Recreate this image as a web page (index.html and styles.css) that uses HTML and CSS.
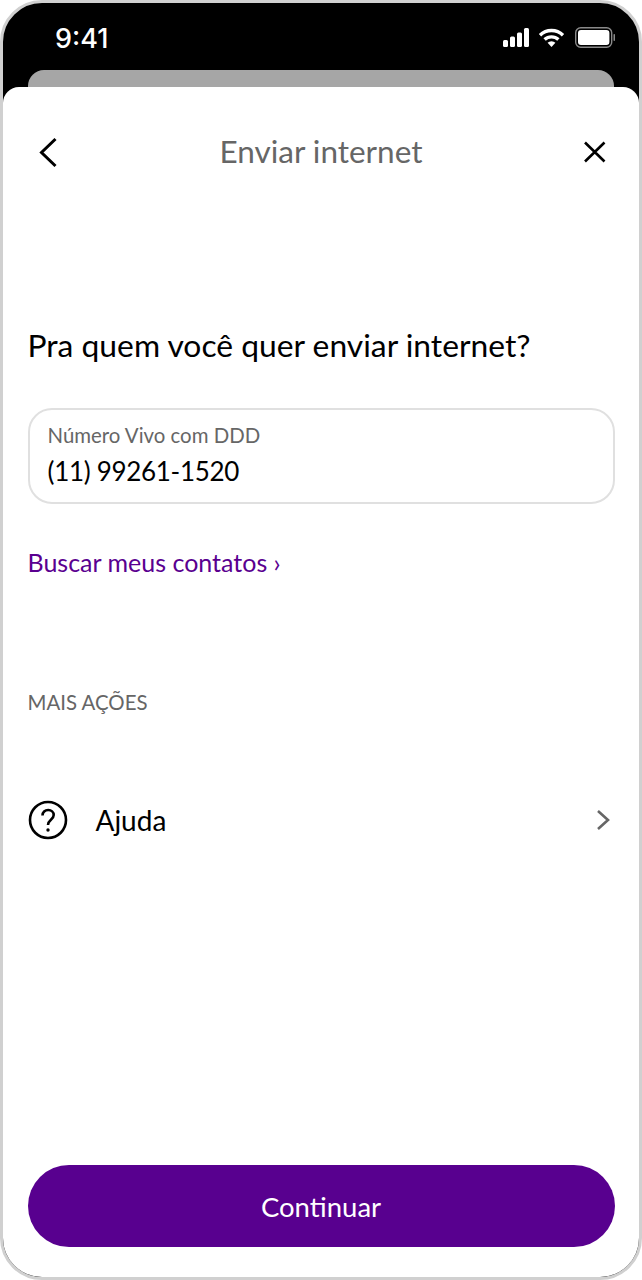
FILE: index.html
```html
<!DOCTYPE html>
<html lang="pt-BR">
<head>
<meta charset="utf-8">
<title>Enviar internet</title>
<link rel="stylesheet" href="styles.css">
</head>
<body>
<div class="phone">
  <div class="statusbar">
    <span class="time">9:41</span>
    <div class="status-icons">
      <svg class="signal" width="26" height="20" viewBox="0 0 26 20"><rect x="0" y="12" width="5" height="7" rx="1.5"/><rect x="7" y="8.5" width="5" height="10.5" rx="1.5"/><rect x="14" y="4.5" width="5" height="14.5" rx="1.5"/><rect x="21" y="0" width="5" height="19" rx="1.5"/></svg>
      <svg class="wifi" width="27" height="20" viewBox="0 0 27 20"><path d="M2 7.2a16.500 16.500 0 0 1 23 0" /><path d="M6.600 11.600a10 10 0 0 1 13.800 0"/><path class="wifi-dot" d="M13.500 19l-3.900-4.200a5.600 5.600 0 0 1 7.800 0z"/></svg>
      <svg class="battery" width="41" height="21" viewBox="0 0 41 21"><rect class="battery-case" x="0.700" y="0.700" width="36" height="19.600" rx="5"/><rect class="battery-fill" x="3" y="3" width="31.400" height="15" rx="3"/><rect class="battery-cap" x="38.500" y="7" width="1.500" height="7" rx="0.700"/></svg>
    </div>
  </div>
  <div class="peek"></div>
  <main class="sheet">
    <header class="topbar">
      <svg class="icon-btn" width="40" height="40" viewBox="0 0 40 40"><path d="M27.500 7 L13.500 20.500 L27.500 34" /></svg>
      <h1 class="title">Enviar internet</h1>
      <svg class="icon-btn thin" width="40" height="40" viewBox="0 0 40 40"><path d="M10 10.500 L29.500 29.500 M29.500 10.500 L10 29.500"/></svg>
    </header>
    <h2 class="question">Pra quem você quer enviar internet?</h2>
    <div class="field">
      <span class="field-label">Número Vivo com DDD</span>
      <span class="field-value">(11) 99261-1520</span>
    </div>
    <a class="contacts" href="#">Buscar meus contatos ›</a>
    <h3 class="section">MAIS AÇÕES</h3>
    <div class="row">
      <svg class="help" width="40" height="40" viewBox="0 0 40 40"><circle cx="20" cy="20" r="18"/><path d="M14.500 15.500c0-3.500 2.500-5.500 5.700-5.500 3.100 0 5.500 2 5.500 5 0 4.800-5.700 4.800-5.700 10"/><circle class="help-dot" cx="20" cy="30" r="1.700"/></svg>
      <span class="row-label">Ajuda</span>
      <svg class="row-chevron" width="16" height="24" viewBox="0 0 16 24"><path d="M3 3 L13 12 L3 21"/></svg>
    </div>
    <button class="cta" type="button">Continuar</button>
  </main>
</div>
</body>
</html>
```
FILE: styles.css
```css
* { box-sizing: border-box; }
html, body { margin: 0; padding: 0; background: #fff; }
body { font-family: Lato, "Noto Sans", sans-serif; }
.phone {
  width: 642px;
  height: 1280px;
  border: 3px solid #d0d0d0;
  border-radius: 42px;
  background: #000;
  overflow: hidden;
  display: flex;
  flex-direction: column;
}
.statusbar {
  height: 67px;
  flex: none;
  display: flex;
  justify-content: space-between;
  align-items: flex-start;
  padding: 20px 23px 0 52px;
  color: #fff;
}
.time { font-family: Inter, sans-serif; font-size: 27px; line-height: 32px; font-weight: 500; }
.status-icons { display: flex; align-items: center; gap: 9px; padding-top: 4px; }
.signal { fill: #fff; }
.wifi path { fill: none; stroke: #fff; stroke-width: 3.400; }
.wifi .wifi-dot { fill: #fff; stroke: none; }
.battery { margin-left: 1px; }
.battery-case { fill: none; stroke: #8a8a8a; stroke-width: 1.400; }
.battery-fill { fill: #fff; }
.battery-cap { fill: #8a8a8a; }
.peek {
  height: 17px;
  flex: none;
  margin: 0 25px;
  background: #a6a6a6;
  border-radius: 16px 16px 0 0;
}
.sheet {
  flex: 1;
  background: #fff;
  border-radius: 16px 16px 0 0;
  display: flex;
  flex-direction: column;
  padding: 0 24.500px 30px;
}
.topbar {
  display: flex;
  justify-content: space-between;
  align-items: center;
  margin-top: 45px;
  height: 40px;
}
.icon-btn { fill: none; stroke: #000; stroke-width: 3; }
.icon-btn.thin { stroke-width: 2.600; }
.title {
  margin: 0 0 2px;
  font-size: 31.500px;
  line-height: 38px;
  font-weight: 400;
  color: #666;
}
.question {
  margin: 153px 0 0;
  font-size: 31.800px;
  line-height: 40px;
  font-weight: 400;
  color: #000;
}
.field {
  margin-top: 43px;
  height: 96px;
  border: 2px solid #e0e0e0;
  border-radius: 24px;
  padding: 13px 18px 0;
  display: flex;
  flex-direction: column;
}
.field-label { font-size: 20.400px; line-height: 24px; color: #666; }
.field-value { font-size: 26px; letter-spacing: -0.300px; line-height: 36px; margin-top: 6px; color: #000; }
.contacts {
  margin-top: 42px;
  font-size: 25px;
  line-height: 32px;
  color: #5a0090;
  text-decoration: none;
}
.section {
  margin: 110px 0 0;
  font-size: 20.400px;
  line-height: 28px;
  font-weight: 400;
  color: #666;
}
.row {
  margin-top: 84px;
  display: flex;
  align-items: center;
  height: 40px;
}
.help { fill: none; stroke: #000; stroke-width: 2.600; }
.help-dot { fill: #000; stroke: none; }
.row-label { margin-left: 28px; font-size: 28px; line-height: 36px; color: #000; flex: 1; }
.row-chevron { fill: none; stroke: #666; stroke-width: 2.600; margin-right: 4px; }
.cta {
  margin-top: auto;
  height: 82px;
  border: 0;
  border-radius: 41px;
  background: #58008f;
  color: #fff;
  font-family: inherit;
  font-size: 27.500px;
}
```
